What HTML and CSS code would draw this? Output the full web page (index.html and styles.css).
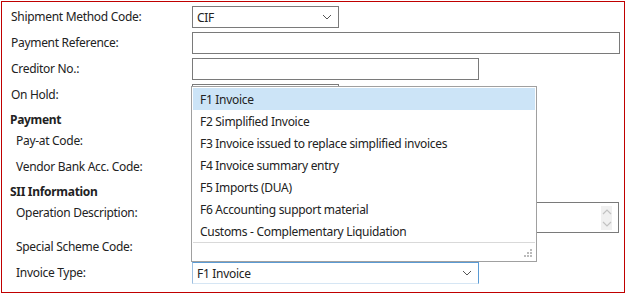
FILE: index.html
```html
<!DOCTYPE html>
<html lang="en">
<head>
    <meta charset="UTF-8">
    <title>Vendor Card - Invoicing</title>
    <link rel="stylesheet" href="styles.css">
</head>
<body>
    <div class="frame">
        <div class="row">
            <div class="label">Shipment Method Code:</div>
            <div class="field select w-short">
                <span>CIF</span>
                <svg class="chev" width="10" height="6" viewBox="0 0 10 6"><path d="M1 1 L5 5 L9 1" fill="none" stroke="#555" stroke-width="1"/></svg>
            </div>
        </div>
        <div class="row">
            <div class="label">Payment Reference:</div>
            <div class="field w-long"></div>
        </div>
        <div class="row">
            <div class="label">Creditor No.:</div>
            <div class="field w-mid"></div>
        </div>
        <div class="row">
            <div class="label">On Hold:</div>
            <div class="field w-short"></div>
        </div>

        <div class="group">Payment</div>
        <div class="row sub">
            <div class="label">Pay-at Code:</div>
            <div class="field w-mid"></div>
        </div>
        <div class="row sub">
            <div class="label">Vendor Bank Acc. Code:</div>
            <div class="field w-mid"></div>
        </div>

        <div class="group">SII Information</div>
        <div class="row sub top">
            <div class="label">Operation Description:</div>
            <div class="field area">
                <div class="scroll">
                    <svg width="10" height="6" viewBox="0 0 10 6"><path d="M1 5 L5 1 L9 5" fill="none" stroke="#c2c2c2" stroke-width="1.2"/></svg>
                    <svg width="10" height="6" viewBox="0 0 10 6"><path d="M1 1 L5 5 L9 1" fill="none" stroke="#c2c2c2" stroke-width="1.2"/></svg>
                </div>
            </div>
        </div>
        <div class="row sub">
            <div class="label">Special Scheme Code:</div>
            <div class="field w-mid"></div>
        </div>
        <div class="row sub">
            <div class="label">Invoice Type:</div>
            <div class="field select focused w-mid">
                <span>F1 Invoice</span>
                <svg class="chev" width="10" height="6" viewBox="0 0 10 6"><path d="M1 1 L5 5 L9 1" fill="none" stroke="#555" stroke-width="1"/></svg>
            </div>
        </div>

        <!-- open list of the Invoice Type select -->
        <div class="dropdown">
            <div class="item selected">F1 Invoice</div>
            <div class="item">F2 Simplified Invoice</div>
            <div class="item">F3 Invoice issued to replace simplified invoices</div>
            <div class="item">F4 Invoice summary entry</div>
            <div class="item">F5 Imports (DUA)</div>
            <div class="item">F6 Accounting support material</div>
            <div class="item">Customs - Complementary Liquidation</div>
            <div class="list-foot">
                <svg class="grip" width="9" height="9" viewBox="0 0 9 9">
                    <rect x="6" y="0" width="2" height="2" fill="#bbb"/>
                    <rect x="3" y="3" width="2" height="2" fill="#bbb"/>
                    <rect x="6" y="3" width="2" height="2" fill="#bbb"/>
                    <rect x="0" y="6" width="2" height="2" fill="#bbb"/>
                    <rect x="3" y="6" width="2" height="2" fill="#bbb"/>
                    <rect x="6" y="6" width="2" height="2" fill="#bbb"/>
                </svg>
            </div>
        </div>
    </div>
</body>
</html>
```

FILE: styles.css
```css
body {
    margin: 0;
    font-family: "Noto Sans", "Open Sans", sans-serif;
    font-size: 12px;
    letter-spacing: -0.3px;
    color: #222;
    background-color: #fff;
}
.frame {
    position: relative;
    box-sizing: border-box;
    width: 624px;
    height: 292px;
    margin: 1px;
    border: 1px solid #c00000;
    padding: 4px 0 0 9px;
    display: flex;
    flex-direction: column;
}
.row {
    display: flex;
    align-items: center;
    height: 22px;
    margin-bottom: 4px;
}
.row.top {
    align-items: flex-start;
    height: 30px;
}
.label {
    width: 181px;
    flex-shrink: 0;
    line-height: 22px;
    white-space: nowrap;
}
.sub .label {
    padding-left: 5px;
    width: 176px;
}
.group {
    height: 20px;
    line-height: 20px;
    font-weight: bold;
    margin-left: -1px;
}
.field {
    box-sizing: border-box;
    height: 22px;
    border: 1px solid #7a7a7a;
    background-color: #fff;
    display: flex;
    align-items: center;
    padding: 0 4px;
}
.w-short {
    width: 147px;
}
.w-mid {
    width: 287px;
}
.w-long {
    width: 428px;
}
.select {
    justify-content: space-between;
    padding-right: 6px;
}
.chev {
    display: block;
}
.focused {
    border-color: #5a9bd5 #5a9bd5 #d6e6f4 #9dbfe0;
}
.area {
    width: 427px;
    height: 31px;
    justify-content: flex-end;
    padding: 0 6px 0 0;
}
.scroll {
    width: 11px;
    height: 24px;
    background-color: #f0f0f0;
    display: flex;
    flex-direction: column;
    justify-content: space-around;
    align-items: center;
}
.dropdown {
    position: absolute;
    left: 189px;
    top: 84px;
    width: 346px;
    height: 176px;
    box-sizing: border-box;
    border: 1px solid #a0a0a0;
    padding: 1px;
    background-color: #fff;
    display: flex;
    flex-direction: column;
}
.item {
    height: 22px;
    line-height: 24px;
    padding-left: 7px;
    white-space: nowrap;
}
.item.selected {
    background-color: #cce4f7;
}
.list-foot {
    flex: 1;
    border-top: 1px solid #d9d9d9;
    display: flex;
    justify-content: flex-end;
    align-items: flex-end;
    padding: 0 2px 2px 0;
}
```
